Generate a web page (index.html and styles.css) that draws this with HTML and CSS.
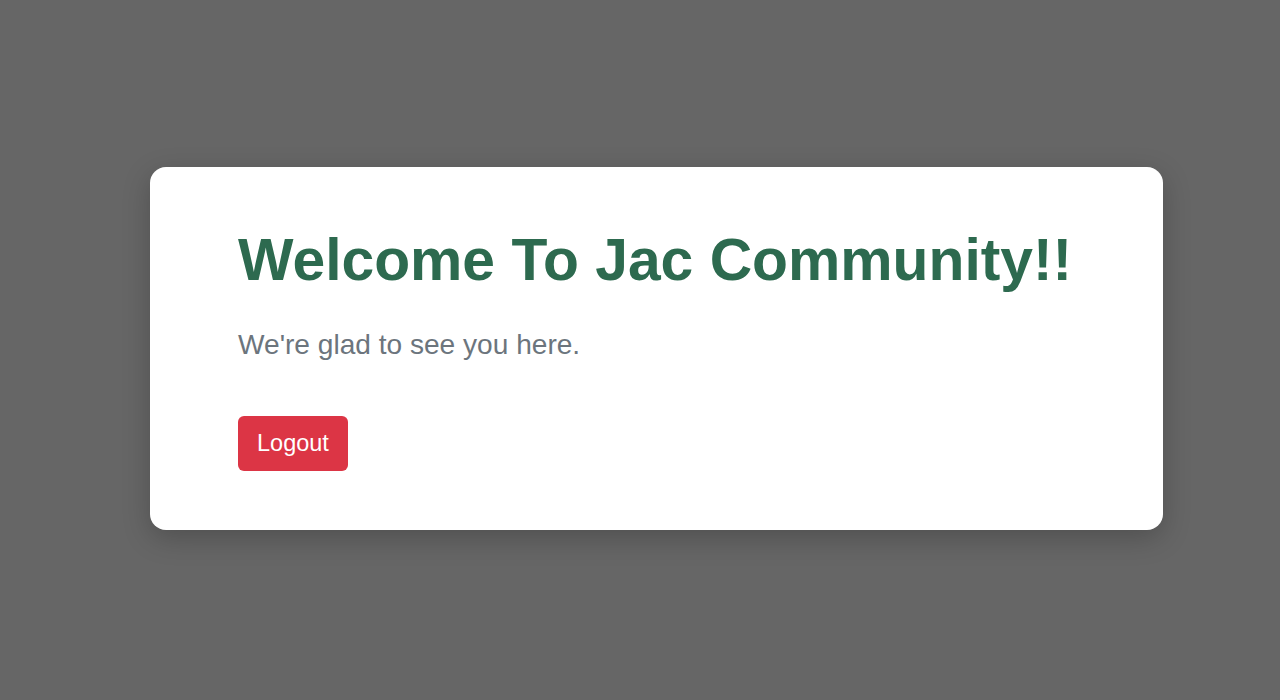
FILE: index.html
```html
<!DOCTYPE html>
<html lang="en">
<head>
<meta charset="utf-8">
<title>Welcome</title>
<link rel="stylesheet" href="styles.css">
</head>
<body>
<main class="page">
  <section class="card">
    <h1 class="title">Welcome To Jac Community!!</h1>
    <p class="subtitle">We're glad to see you here.</p>
    <button class="logout" type="button">Logout</button>
  </section>
</main>
</body>
</html>
```

FILE: styles.css
```css
html, body {
  margin: 0;
  padding: 0;
  height: 100%;
}

body {
  background: #666666;
  font-family: "Liberation Sans", Arial, sans-serif;
}

.page {
  box-sizing: border-box;
  height: 100%;
  display: flex;
  align-items: center;
  justify-content: center;
  padding-left: 33px;
  padding-bottom: 3px;
}

.card {
  box-sizing: border-box;
  width: 1013px;
  background: #ffffff;
  border-radius: 16px;
  padding: 59px 88px;
  box-shadow: 0 8px 28px rgba(0, 0, 0, 0.22);
}

.title {
  margin: 0 0 36px;
  font-size: 58.8px;
  font-weight: 700;
  line-height: 67px;
  color: #2d6a4f;
}

.subtitle {
  margin: 0 0 55px;
  font-size: 28.1px;
  line-height: 32px;
  color: #6c757d;
}

.logout {
  display: block;
  border: none;
  border-radius: 6px;
  background: #dc3545;
  color: #ffffff;
  font-family: "Liberation Sans", Arial, sans-serif;
  font-size: 23.5px;
  line-height: 27px;
  padding: 14px 19px;
  cursor: pointer;
}
```
